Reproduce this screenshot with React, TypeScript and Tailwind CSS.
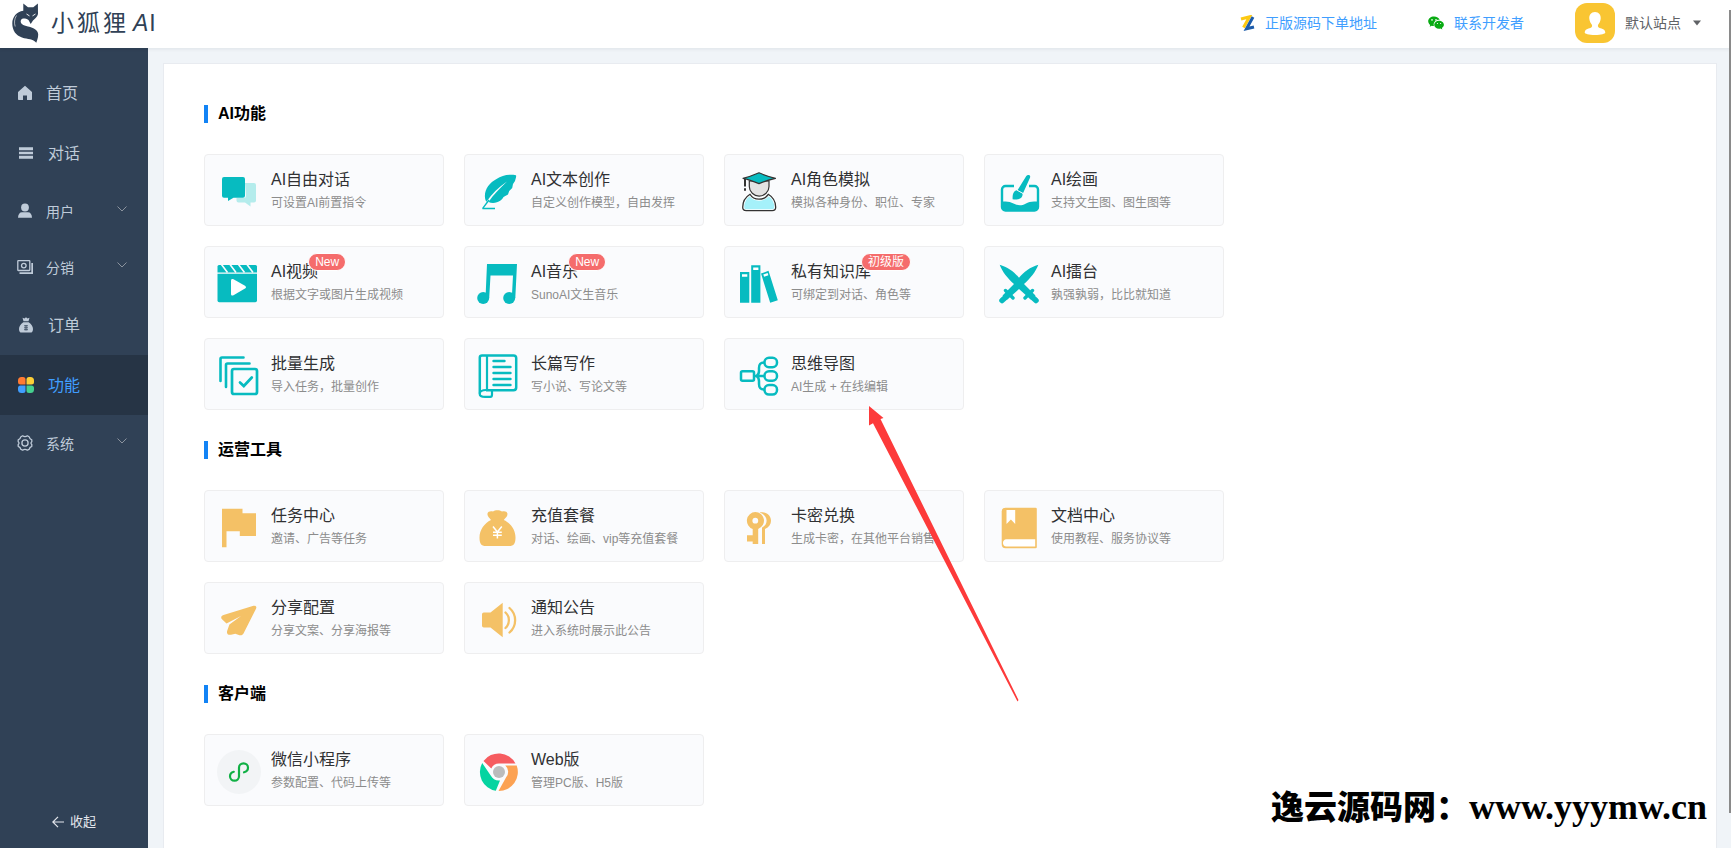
import React from "react";

const TEAL = "#07bbc0";
const GOLD = "#f4c166";
const CARD = "#fafbfd";

type IconProps = { children: React.ReactNode };

function CardIcon({ children }: IconProps) {
  return (
    <svg viewBox="0 0 44 44" className="mt-[2px] h-11 w-11 shrink-0" fill="none" aria-hidden="true">
      {children}
    </svg>
  );
}

const icons: Record<string, React.ReactNode> = {
  chat: (
    <>
      <path d="M28 13h9a2 2 0 0 1 2 2v15.500a2 2 0 0 1-2 2h-3.500v4l-5.500-4h-6.500a2 2 0 0 1-2-2V28h7.500a2 2 0 0 0 2-2z" fill="#b4ecec" />
      <path d="M7 7h19a2 2 0 0 1 2 2v16.700a2 2 0 0 1-2 2h-9.500L11 31v-3.300H7a2 2 0 0 1-2-2V9a2 2 0 0 1 2-2z" fill={TEAL} />
    </>
  ),
  feather: (
    <>
      <path d="M39 5.200C31 4 25 5.500 19.500 9 12 13 6.500 20.500 8.200 29c.3 1.300.7 2 1.200 2.700C15 24 21.500 17 30 11.500 23 18 16.500 24.500 11.500 32c3.500 1.700 8.500 1.200 12-1.500 1.300-1 2.200-2 3-3.500l4.500-2.500 1.200-3.500 3-3 .8-4 2-3C38.700 8.500 39.500 7 39 5.200z" fill={TEAL} />
      <path d="M5.500 38.700 12 30M5.500 38.500H18" stroke={TEAL} strokeWidth="1.400" />
    </>
  ),
  graduate: (
    <>
      <path d="M12.300 11v5.500a9.800 9.500 0 0 0 19.700 0V11z" fill="#e3e3e3" stroke="#333" strokeWidth="1.200" />
      <path d="M13 24.300c2 3.500 5.500 4.900 9 4.900s7-1.400 9.300-4.900c5 3 7.400 8 7.400 13 0 2-1.300 3.400-3.400 3.400H9.200c-2.200 0-3.500-1.400-3.500-3.400 0-5 2.500-10 7.300-13z" fill="#a5f1fa" stroke="#fff" strokeWidth="3" />
      <path d="M13 24.300c2 3.500 5.500 4.900 9 4.900s7-1.400 9.300-4.900c5 3 7.400 8 7.400 13 0 2-1.300 3.400-3.400 3.400H9.200c-2.200 0-3.500-1.400-3.500-3.400 0-5 2.500-10 7.300-13z" stroke="#333" strokeWidth="1.300" />
      <path d="M6 8.300C12 7 17 5 22 2.800 27 5 32.500 7 38.500 8.300 32.500 9.500 27 11.500 22 13.600 17 11.500 12 9.500 6 8.300z" fill={TEAL} stroke="#333" strokeWidth="1.200" strokeLinejoin="round" />
      <path d="M8 9v7.500M8 18.300v2.400" stroke="#333" strokeWidth="2" />
    </>
  ),
  paint: (
    <>
      <path d="M17 16H8.500A3.500 3.500 0 0 0 5 19.500V37a3.500 3.500 0 0 0 3.500 3.500h29A3.500 3.500 0 0 0 41 37V19.500a3.500 3.500 0 0 0-3.500-3.500H32" stroke={TEAL} strokeWidth="2.400" />
      <path d="M4.500 31.800c5.500-1 8.500 0 12 1.700 5 2.500 8 2.300 12 .2 4-2.200 7.500-2.700 13-1.900V37a3.500 3.500 0 0 1-3.500 3.500H8.500A3.500 3.500 0 0 1 5 37z" fill={TEAL} />
      <path d="M32.500 5.300c-1-.8-2.500-.4-3.200.7L20.500 20.300l5.500 3 7-15.500c.4-.9.300-1.900-.5-2.500z" fill={TEAL} />
      <path d="M20 20.300c-3.300.8-4.500 3-4.400 9 5 .7 8.800-.2 9.700-3.300.4-1.200.3-2 .2-2.600z" fill={TEAL} />
      <path d="M20 20.200l6 3.200" stroke="#fff" strokeWidth=".8" />
    </>
  ),
  video: (
    <>
      <path d="M2 3h36.500q1.500 0 1.500 1.500V10.500H.5V4.500Q.5 3 2 3z" fill={TEAL} />
      <path d="M4.500 2.500l6 8M13 2.500l6 8M21.500 2.500l6 8M30 2.500l6 8" stroke={CARD} strokeWidth="1.600" />
      <path d="M.5 11.800H40V38.500q0 1.700-1.700 1.700H2.200Q.5 40.200.5 38.500z" fill={TEAL} />
      <path d="M14 18.500c0-1.500 1.200-2 2.500-1.300l11.500 6.600c1.300.8 1.300 2 0 2.800l-11.500 6.700c-1.300.7-2.500.2-2.500-1.300z" fill="#fff" />
    </>
  ),
  music: (
    <>
      <path d="M10 2h30l-1.700 34h-3.500L36 13.500H13.500L12.200 36H8.500z" fill={TEAL} />
      <circle cx="6.200" cy="36" r="6" fill={TEAL} />
      <circle cx="32.200" cy="36" r="6" fill={TEAL} />
    </>
  ),
  books: (
    <>
      <path d="M3 10h9.300v30.700H3zM14.200 3.200h9.200v37.500h-9.200zM24 11.500l7.500-2.800 9.300 29.500-7.600 2.600z" fill={TEAL} />
      <path d="M5 12.300h5.300v2.400H5zM16.200 5.500h5.200v2.400h-5.200zM26.300 12.500l4.300-1.500.8 2.300-4.300 1.500z" fill="#fff" />
    </>
  ),
  swords: (
    <>
      <path d="M2.700 2.700C10.500 5 17.500 10 22 15.700 26.500 10 33.500 5 41.300 2.700 39 9.500 33 16.500 27 22l11.500 11.500L34 37.700 22 27 10 37.700 5.500 33.500 17 22C11 16.500 5 9.500 2.700 2.700z" fill={TEAL} />
      <path d="M8.500 28.500 16 36M35.500 28.500 28 36" stroke={TEAL} strokeWidth="3.400" strokeLinecap="round" />
      <path d="M10 34 5 38.500M34 34l5 4.500" stroke={TEAL} strokeWidth="5.500" strokeLinecap="round" />
    </>
  ),
  batch: (
    <>
      <path d="M3.500 27V5q0-1.500 1.500-1.500h21.500M9 33V11q0-1.500 1.500-1.500H32.500" stroke={TEAL} strokeWidth="2.600" strokeLinecap="round" />
      <rect x="15" y="15" width="25" height="25" rx="2" stroke={TEAL} strokeWidth="2.700" />
      <path d="M23 28.500l3.800 3.500 8-8.500" stroke={TEAL} strokeWidth="2.700" strokeLinecap="round" />
    </>
  ),
  scroll: (
    <>
      <path d="M2.800 39.500V3.500Q2.800 1.400 5 1.400h31.500q2.700 0 2.700 2.700v29.400q0 2.700-2.700 2.700H9" stroke={TEAL} strokeWidth="2.500" />
      <path d="M10 1.500V36" stroke={TEAL} strokeWidth="2.200" />
      <path d="M9 36c-4 0-6.300 1.700-6.300 3.700 0 2 2.500 3.200 5.300 3.200h5.300c1.300 0 1.700-.7 1.700-2.400v-4" stroke={TEAL} strokeWidth="2.200" />
      <path d="M16.500 7h11M16.500 13h17M16.500 19h17M16.500 25h17M16.500 31h17" stroke={TEAL} strokeWidth="2.400" strokeLinecap="round" />
    </>
  ),
  mind: (
    <g stroke={TEAL} strokeWidth="2.500">
      <rect x="4" y="17.200" width="13" height="9.600" rx="1.500" />
      <path d="M17 22h10.500M27.500 8.500c-4.500 0-5.500 2-5.500 5.500v3c0 3-1 4-2.500 5 1.500 1 2.500 2 2.500 5v3c0 3.500 1 5.500 5.500 5.500" />
      <rect x="27.500" y="3.700" width="12.500" height="9.600" rx="4.500" />
      <rect x="27.500" y="17.200" width="12.500" height="9.600" rx="4.500" />
      <rect x="27.500" y="31" width="12.500" height="9.600" rx="4.500" />
    </g>
  ),
  flag: <path d="M5 2.700h20.500v4.500H39V30H22.800v-4.700H9.500v16H5z" fill={GOLD} />,
  bag: (
    <>
      <path d="M14 14c-1.500-2.500-4-3.500-3.500-6.500.4-2 3-2.700 5.500-2 2-1.500 6.500-1.700 9 0 2.500-.7 5-.2 5.400 2 .4 3-2 4-3.600 6.500C33.500 17 38.500 24 38.500 31.500c0 6-1.500 8.500-6.500 8.500H9c-5 0-6.500-2.500-6.500-8.500 0-7.500 5-14.500 11.500-17.500z" fill={GOLD} />
      <path d="M16 20.500l4.400 5.500 4.400-5.500M20.400 26v6.500M16 26.200h8.800M16 29.300h8.800" stroke="#fff" strokeWidth="1.500" />
    </>
  ),
  key: (
    <>
      <path d="M22.500 6.500C29 5 34 9 34 14.700c0 3.600-2 6.500-6 8.200V38h-3V21.500c3-1.500 4.600-4 4.600-6.800 0-3.600-2.600-7-7.100-8.200z" fill={GOLD} />
      <path fillRule="evenodd" d="M18.300 6a8.700 8.700 0 0 1 2.900 16.900V38h-5.500v-2.500H10v-6.300h5.700v-6.300A8.700 8.700 0 0 1 18.300 6zm0 5.800a2.900 2.900 0 1 0 0 5.800 2.900 2.900 0 0 0 0-5.800z" fill={GOLD} />
    </>
  ),
  book: (
    <>
      <path d="M8.500 1.700h30q1.300 0 1.300 1.300v38q0 1.300-1.300 1.300h-30Q4.700 42.300 4.700 38V5.500q0-3.800 3.800-3.800z" fill={GOLD} />
      <path d="M9.500 4h8.700v14l-4.300-4.500L9.500 18zM9.500 33.300h28.700v7.200H9.500c-4.700 0-4.700-7.200 0-7.200z" fill="#fff" />
    </>
  ),
  plane: (
    <path d="M36.500 7.700c2.300-.4 3.500 1 2.500 3L26.500 35.500c-.8 1.500-2.200 2.200-4 1.700l-4.200-1.500-4.300 1c-3 .6-4.700-1-3.800-4l2.200-6.100L24 18 9.500 25.500 5 21.300c-1.400-1.600-1-3.500 1.500-4.300z" fill={GOLD} />
  ),
  speaker: (
    <>
      <path d="M6.800 14.500h6.700L25.700 4.800v34.500L13.500 29.500H6.800Q5 29.500 5 27.700V16.300Q5 14.500 6.800 14.500z" fill={GOLD} />
      <path d="M28.500 14.500c4.500 4 4.500 11.500 0 15.500M32.500 10c7.500 6.500 7.500 18 0 24.500" stroke={GOLD} strokeWidth="2.300" strokeLinecap="round" />
    </>
  ),
  mini: (
    <>
      <circle cx="22" cy="22" r="22" fill="#f2f4f6" />
      <path d="M27 22.300c2.500-.6 4-2.300 4-4.500 0-2.500-2-4.400-4.500-4.400S22 15.300 22 17.800v8.400c0 2.500-2 4.500-4.500 4.500S13 28.700 13 26.200c0-2 1.500-3.800 3.800-4.400" stroke="#11b045" strokeWidth="2.200" strokeLinecap="round" />
    </>
  ),
  chrome: (
    <>
      <path d="M6.500 11A19 19 0 0 1 38.500 13.500H22a8.500 8.500 0 0 0-7.700 5z" fill="#f65c60" />
      <path d="M39.700 15.500A19 19 0 0 1 21.500 41l7.500-13.500a8.500 8.500 0 0 0-.7-12z" fill="#fca253" />
      <path d="M5.200 13A19 19 0 0 0 18.800 40.800L23 30.500c-4 .5-7.500-1.500-9.300-5z" fill="#05d4a1" />
      <circle cx="22" cy="22" r="6" fill="#bcbcbc" />
    </>
  ),
};

type Item = { icon: string; title: string; desc: string; badge?: string };
type Section = { title: string; items: Item[] };

const sections: Section[] = [
  {
    title: "AI功能",
    items: [
      { icon: "chat", title: "AI自由对话", desc: "可设置AI前置指令" },
      { icon: "feather", title: "AI文本创作", desc: "自定义创作模型，自由发挥" },
      { icon: "graduate", title: "AI角色模拟", desc: "模拟各种身份、职位、专家" },
      { icon: "paint", title: "AI绘画", desc: "支持文生图、图生图等" },
      { icon: "video", title: "AI视频", desc: "根据文字或图片生成视频", badge: "New" },
      { icon: "music", title: "AI音乐", desc: "SunoAI文生音乐", badge: "New" },
      { icon: "books", title: "私有知识库", desc: "可绑定到对话、角色等", badge: "初级版" },
      { icon: "swords", title: "AI擂台", desc: "孰强孰弱，比比就知道" },
      { icon: "batch", title: "批量生成", desc: "导入任务，批量创作" },
      { icon: "scroll", title: "长篇写作", desc: "写小说、写论文等" },
      { icon: "mind", title: "思维导图", desc: "AI生成 + 在线编辑" },
    ],
  },
  {
    title: "运营工具",
    items: [
      { icon: "flag", title: "任务中心", desc: "邀请、广告等任务" },
      { icon: "bag", title: "充值套餐", desc: "对话、绘画、vip等充值套餐" },
      { icon: "key", title: "卡密兑换", desc: "生成卡密，在其他平台销售" },
      { icon: "book", title: "文档中心", desc: "使用教程、服务协议等" },
      { icon: "plane", title: "分享配置", desc: "分享文案、分享海报等" },
      { icon: "speaker", title: "通知公告", desc: "进入系统时展示此公告" },
    ],
  },
  {
    title: "客户端",
    items: [
      { icon: "mini", title: "微信小程序", desc: "参数配置、代码上传等" },
      { icon: "chrome", title: "Web版", desc: "管理PC版、H5版" },
    ],
  },
];

function NavIcon({ name }: { name: string }) {
  const c = "currentColor";
  return (
    <svg viewBox="0 0 16 16" className="h-4 w-4 shrink-0" fill="none" aria-hidden="true">
      {name === "home" && <path d="M8 .8 15 7v7.200q0 .8-.8.800H10v-4.500H6V15H1.800Q1 15 1 14.200V7z" fill={c} />}
      {name === "list" && <path d="M1 2.200h14v3H1zM1 6.700h14v2.600H1zM1 10.800h14v3H1z" fill={c} />}
      {name === "user" && (
        <>
          <circle cx="8" cy="4.500" r="3.900" fill={c} />
          <path d="M1 14.800c0-3.500 1.800-5.500 4-5.500h6c2.200 0 4 2 4 5.500z" fill={c} />
        </>
      )}
      {name === "money" && (
        <g stroke={c} strokeWidth="1.300">
          <rect x=".8" y="1.700" width="12" height="9.800" rx=".5" />
          <circle cx="6.800" cy="6.600" r="2.300" />
          <path d="M2.500 14.200h12.700V4" strokeWidth="1.800" />
        </g>
      )}
      {name === "bag" && (
        <>
          <path d="M4.500.8l2 .7L8 .3l1.500 1.200 2-.7-1 3.500h-5zM5.300 5.200h5.400C13.500 7 15 9.500 15 12c0 2.500-1 3.600-2.500 3.600h-9C2 15.600 1 14.500 1 12c0-2.500 1.500-5 4.300-6.800z" fill={c} />
          <path d="M8 8v5.500M6 8.800h4M6 10.800h4M6 12.700h4" stroke="#304156" strokeWidth=".8" />
        </>
      )}
      {name === "apps" && (
        <>
          <path d="M3.500 0H5q2.500 0 2.500 2.500v5H2.500Q0 7.500 0 5V3.500Q0 0 3.500 0z" fill="#ff7b33" />
          <path d="M11 0h1.500Q16 0 16 3.500V5q0 2.500-2.500 2.500h-5v-5Q8.500 0 11 0z" fill="#fdcf36" />
          <path d="M2.500 8.500h5v5Q7.500 16 5 16H3.500Q0 16 0 12.500V11q0-2.500 2.500-2.500z" fill="#409eff" />
          <path d="M8.500 8.500h5Q16 8.500 16 11v1.500q0 3.500-3.500 3.500H11q-2.500 0-2.500-2.500z" fill="#45d08f" />
        </>
      )}
      {name === "gear" && (
        <g stroke={c} strokeWidth="1.300" strokeLinejoin="round">
          <path d="M5.600.8Q8 2.600 10.400.8l1.900 1.200q.2 2 2.500 2.800v1.900q-1.700 1.300 0 2.700v1.900q-2.300.8-2.500 2.800l-1.900 1.100Q8 13.400 5.600 15.200l-1.900-1.100q-.2-2-2.500-2.800V9.400q1.700-1.400 0-2.700V4.800Q3.500 4 3.700 2z" />
          <circle cx="8" cy="8" r="3.100" />
        </g>
      )}
    </svg>
  );
}

type Nav = { icon: string; label: string; sub?: boolean; active?: boolean; wide?: boolean };

const nav: Nav[] = [
  { icon: "home", label: "首页" },
  { icon: "list", label: "对话", wide: true },
  { icon: "user", label: "用户", sub: true },
  { icon: "money", label: "分销", sub: true },
  { icon: "bag", label: "订单", wide: true },
  { icon: "apps", label: "功能", wide: true, active: true },
  { icon: "gear", label: "系统", sub: true },
];

function Logo() {
  return (
    <a href="#home" className="flex items-center gap-3 pl-[11px] text-[#304156]">
      <svg viewBox="0 0 28 40" className="h-10 w-7" aria-hidden="true">
        <path d="M12.300.5 17 4.300h5.300L26.900.5 27 11c-.5 3-3.500 5-5 6.500L19.700 21l-2.200-4c-3.500-2-6.800-2-7.700.5-.8 3 2.200 5 7.200 6 6 1.300 10.200 4 10.200 8 0 3.500-1.200 6-1.900 8.300-3.300-4.300-8.300-3.300-14.300-5.300-6-2-9.700-7-9.700-14C1.300 14 5.500 9 12.300 7.800z" fill="currentColor" />
        <path d="M5.500 12.500C3.300 16 3 20 4.200 23.500" stroke="#fff" strokeWidth=".6" fill="none" />
        <path d="M15.500 11l3 1.900M24.500 11l-3 1.900" stroke="#fff" strokeWidth=".9" />
      </svg>
      <span className="flex items-baseline gap-[3px] text-[23px] leading-10">
        <span>小</span>
        <span>狐</span>
        <span>狸</span>
        <span className="flex gap-px pl-1">
          <span className="italic">A</span>
          <span>I</span>
        </span>
      </span>
    </a>
  );
}

function Header() {
  return (
    <header className="relative z-10 flex h-12 shrink-0 items-start justify-between bg-white pt-[3px] pr-[30px] shadow-[0_1px_4px_rgba(0,21,41,0.08)]">
      <Logo />
      <div className="flex items-center text-sm text-[#409eff]">
        <a href="#source" className="flex items-center gap-2.5">
          <svg viewBox="0 0 16 16" className="h-4 w-4" fill="none" aria-hidden="true">
            <path d="M2 4 10.500 1.800 4.500 12.500" stroke="#fdc912" strokeWidth="3" />
            <path d="M14 2 7.500 13.700l7.500-1.700" stroke="#1c5cab" strokeWidth="3" />
          </svg>
          正版源码下单地址
        </a>
        <a href="#contact" className="ml-[51px] flex items-center gap-2.5">
          <svg viewBox="0 0 16 14" className="h-[14px] w-4" aria-hidden="true">
            <path d="M6 .5C2.700.5.200 2.600.200 5.300c0 1.500.8 2.800 2 3.700l-.5 1.800 2-1.100c.7.200 1.400.3 2.200.3-1-4 2-6.600 5.800-6.300C11 1.800 8.700.5 6 .5z" fill="#09ab13" />
            <path d="M11 4.800c-2.700 0-4.800 1.800-4.800 4s2.100 4 4.800 4c.6 0 1.100-.1 1.600-.2l1.700.9-.4-1.500c1.200-.7 2-1.900 2-3.200 0-2.200-2.200-4-4.900-4z" fill="#09ab13" />
            <g fill="#fff">
              <circle cx="4" cy="3.900" r=".8" />
              <circle cx="8" cy="3.900" r=".8" />
              <circle cx="9.500" cy="7.500" r=".6" />
              <circle cx="12.600" cy="7.500" r=".6" />
            </g>
          </svg>
          联系开发者
        </a>
        <button type="button" className="ml-[51px] flex items-center text-[#606266]">
          <svg viewBox="0 0 40 40" className="h-10 w-10" aria-hidden="true">
            <rect width="40" height="40" rx="12" fill="#f9c532" />
            <path d="M20 9c4 0 6 3 5.700 6.700-.3 2.800-1.700 4.800-2.700 6.300-.5 2 .5 2.700 3.500 3.500 2.700.8 3.700 2 3.800 4 0 1.300-4 2.500-10.300 2.500S9.700 30.800 9.700 29.500c.1-2 1.100-3.200 3.800-4 3-.8 4-1.500 3.500-3.500-1-1.500-2.400-3.500-2.700-6.300C14 12 16 9 20 9z" fill="#fff" />
          </svg>
          <span className="ml-2.5">默认站点</span>
          <svg viewBox="0 0 8 6" className="ml-3 h-[6px] w-2" aria-hidden="true">
            <path d="M0 .5h8L4 5.500z" fill="currentColor" />
          </svg>
        </button>
      </div>
    </header>
  );
}

function Sidebar() {
  return (
    <aside className="flex w-[148px] shrink-0 flex-col bg-[#304156] text-[#bfcbd9]">
      <nav className="pt-[15px]">
        {nav.map((n) => (
          <a
            key={n.label}
            href={"#" + n.icon}
            className={
              "flex items-center pr-[21px] " +
              (n.sub ? "h-14 text-sm " : "h-15 text-base ") +
              (n.wide ? "gap-[14px] pl-[18px] " : "gap-[13px] pl-[17px] ") +
              (n.active ? "bg-[#263445] text-[#409eff]" : "")
            }
          >
            <NavIcon name={n.icon} />
            <span className="grow pt-px">{n.label}</span>
            {n.sub && (
              <svg viewBox="0 0 10 6" className="mb-1 h-[6px] w-2.5 text-[#8b939e]" fill="none" aria-hidden="true">
                <path d="M.5.500 5 5 9.500.500" stroke="currentColor" />
              </svg>
            )}
          </a>
        ))}
      </nav>
      <button type="button" className="mt-auto flex items-center justify-center gap-1.5 pb-4 text-[13px] leading-5 text-[#e4e7ed]">
        <svg viewBox="0 0 12 12" className="h-3 w-3" fill="none" aria-hidden="true">
          <path d="M6 .8.8 6 6 11.200M.8 6H12" stroke="currentColor" strokeWidth="1.200" />
        </svg>
        收起
      </button>
    </aside>
  );
}

function FeatureCard({ item }: { item: Item }) {
  return (
    <a href={"#" + item.icon} className="flex h-[72px] gap-2.5 rounded border border-[#eeeeef] bg-[#fafbfd] px-3 pt-[13px]">
      <CardIcon>{icons[item.icon]}</CardIcon>
      <div className="min-w-0">
        <h3 className="relative w-fit text-base leading-6 whitespace-nowrap text-[#303133]">
          {item.title}
          {item.badge && (
            <span className="absolute -top-[7px] left-[calc(100%-10px)] h-[18px] rounded-full border border-white bg-[#f56c6c] px-1.5 text-xs leading-4 text-white">
              {item.badge}
            </span>
          )}
        </h3>
        <p className="text-xs leading-[22px] whitespace-nowrap text-[#8c8c8c]">{item.desc}</p>
      </div>
    </a>
  );
}

export default function App() {
  return (
    <div className="relative flex h-screen flex-col overflow-hidden bg-[#f0f4f8] font-['Liberation_Sans','Noto_Sans_CJK_SC',sans-serif]">
      <Header />
      <div className="flex min-h-0 grow">
        <Sidebar />
        <main className="grow overflow-hidden pt-[15px] pr-[14px] pl-[15px]">
          <div className="min-h-full border border-[#e8ebf0] bg-white px-10 pt-[41px] pb-10">
            {sections.map((s) => (
              <section key={s.title} className="mb-[31px]">
                <h2 className="flex items-center gap-2.5 text-base leading-[18px] font-bold text-black">
                  <span className="h-[18px] w-1 bg-[#1283f5]" />
                  {s.title}
                </h2>
                <div className="mt-[31px] grid max-w-[1020px] grid-cols-4 gap-5">
                  {s.items.map((item) => (
                    <FeatureCard key={item.title} item={item} />
                  ))}
                </div>
              </section>
            ))}
          </div>
        </main>
      </div>
      <svg viewBox="0 0 150 296" className="pointer-events-none absolute top-[406px] left-[869px] z-20 h-[296px] w-[150px]" aria-hidden="true">
        <path d="M0 0 14.500 12 11.500 13 149.500 294 148.500 295.500 4 17.200 0 19.500z" fill="#fd3a3a" />
      </svg>
      <p className="pointer-events-none absolute right-[24px] bottom-[16px] z-20 flex items-baseline text-[33px] leading-[48px] font-black whitespace-nowrap text-black">
        <span>逸云源码网：</span>
        <span className="font-['Liberation_Serif',serif] text-[36px] font-bold">www.yyymw.cn</span>
      </p>
      <div className="absolute top-2.5 right-0 bottom-[35px] z-20 w-[2px] bg-[#8a8a8a]" />
    </div>
  );
}
